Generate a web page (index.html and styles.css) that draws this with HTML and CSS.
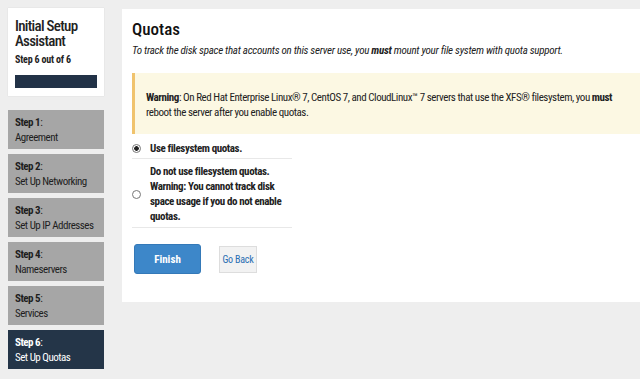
FILE: index.html
```html
<!DOCTYPE html>
<html>
<head>
<meta charset="utf-8">
<link rel="stylesheet" href="styles.css">
</head>
<body>
<div class="page">
  <aside class="sidebar">
    <div class="card">
      <div class="card-title">Initial Setup Assistant</div>
      <div class="card-step">Step 6 out of 6</div>
      <div class="progress"><div class="progress-fill"></div></div>
    </div>
    <ul class="steps">
      <li class="step"><b>Step 1</b>:<br>Agreement</li>
      <li class="step"><b>Step 2</b>:<br>Set Up Networking</li>
      <li class="step"><b>Step 3</b>:<br>Set Up IP Addresses</li>
      <li class="step"><b>Step 4</b>:<br>Nameservers</li>
      <li class="step"><b>Step 5</b>:<br>Services</li>
      <li class="step active"><b>Step 6</b>:<br>Set Up Quotas</li>
    </ul>
  </aside>
  <main class="main">
    <h1 class="title">Quotas</h1>
    <p class="subtitle">To track the disk space that accounts on this server use, you <b>must</b> mount your file system with quota support.</p>
    <div class="warning"><b>Warning</b>: On Red Hat Enterprise Linux® 7, CentOS 7, and CloudLinux™ 7 servers that use the XFS® filesystem, you <b>must</b> reboot the server after you enable quotas.</div>
    <div class="options">
      <label class="option first">
        <span class="radio checked"></span>
        <span class="opt-text">Use filesystem quotas.</span>
      </label>
      <label class="option second">
        <span class="radio"></span>
        <span class="opt-text">Do not use filesystem quotas. Warning: You cannot track disk space usage if you do not enable quotas.</span>
      </label>
    </div>
    <div class="actions">
      <button class="btn-primary">Finish</button>
      <button class="btn-link">Go Back</button>
    </div>
  </main>
</div>
</body>
</html>
```
FILE: styles.css
```css
html, body {
  margin: 0;
  padding: 0;
  background: #eeeeee;
  font-family: "Roboto Condensed", "DejaVu Sans Condensed", "Open Sans", sans-serif;
  color: #222;
}
.page {
  display: flex;
  align-items: flex-start;
  padding: 8px 0 0 8px;
}
.sidebar {
  width: 96px;
  flex: none;
}
.card {
  height: 88px;
  box-sizing: border-box;
  background: #fff;
  padding: 11px 7px 0 7px;
  box-shadow: 0 0 1px rgba(0,0,0,0.15);
}
.card-title {
  font-size: 15px;
  line-height: 15px;
  font-weight: 500;
  color: #222;
  letter-spacing: -0.7px;
}
.card-step {
  font-size: 10px;
  line-height: 12px;
  font-weight: bold;
  margin-top: 5px;
  letter-spacing: -0.2px;
}
.progress {
  margin-top: 9px;
  height: 13px;
  background: #ddd;
}
.progress-fill {
  width: 100%;
  height: 100%;
  background: #223247;
}
.steps {
  list-style: none;
  margin: 14px 0 0 0;
  padding: 0;
  display: flex;
  flex-direction: column;
  gap: 5px;
}
.step {
  height: 39px;
  box-sizing: border-box;
  background: #a6a6a6;
  padding: 5px 7px;
  font-size: 11px;
  line-height: 15px;
  color: #1e1e1e;
  white-space: nowrap;
  letter-spacing: -0.5px;
}
.step.active {
  background: #243548;
  color: #fff;
}
.main {
  flex: 1;
  margin-left: 18px;
  margin-top: 1px;
  height: 293px;
  box-sizing: border-box;
  background: #fff;
  padding: 9px 0 0 10px;
}
.title {
  margin: 0;
  font-size: 17px;
  line-height: 22px;
  font-weight: 500;
  color: #111;
}
.subtitle {
  margin: 3px 0 0 0;
  font-size: 11px;
  line-height: 15px;
  font-style: italic;
  color: #222;
  white-space: nowrap;
  letter-spacing: -0.28px;
}
.warning {
  height: 61px;
  box-sizing: border-box;
  margin-top: 15px;
  background: #fcf8e3;
  border-left: 3px solid #f0c36d;
  padding: 17px 10px 0 11px;
  font-size: 11px;
  line-height: 15px;
  color: #222;
  letter-spacing: -0.45px;
}
.options {
  width: 160px;
  margin-top: 3px;
}
.option {
  display: flex;
  align-items: center;
  border-bottom: 1px solid #e8e8e8;
  box-sizing: border-box;
}
.option.first {
  height: 22px;
  padding-top: 1px;
}
.option.second {
  height: 69px;
  padding-top: 2px;
}
.radio {
  flex: none;
  width: 7px;
  height: 7px;
  border: 1px solid #777;
  border-radius: 50%;
  margin: 0 0 0 0;
  background: #fff;
}
.radio.checked {
  background: radial-gradient(circle, #222 0 2px, #fff 2.6px);
}
.opt-text {
  font-size: 11px;
  line-height: 15px;
  font-weight: bold;
  color: #222;
  padding-left: 9px;
  letter-spacing: -0.4px;
}
.actions {
  display: flex;
  align-items: center;
  gap: 18px;
  margin-top: 16px;
  padding-left: 2px;
}
.btn-primary {
  width: 67px;
  height: 30px;
  background: #3d87c9;
  border: 1px solid #3479b8;
  border-radius: 3px;
  color: #fff;
  font-family: inherit;
  font-size: 11px;
  font-weight: bold;
}
.btn-link {
  width: 38px;
  height: 27px;
  padding: 0;
  white-space: nowrap;
  background: #f2f2f2;
  border: 1px solid #ddd;
  color: #2a6fb3;
  font-family: inherit;
  font-size: 10px;
  letter-spacing: -0.2px;
}
```
